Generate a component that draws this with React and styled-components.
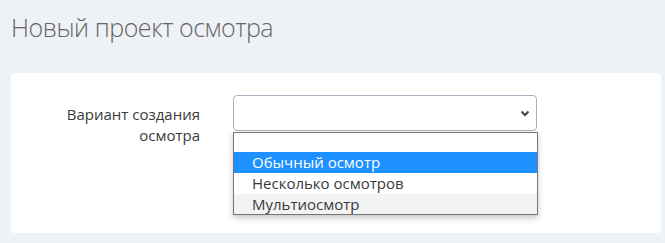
import React from "react";
import styled, { createGlobalStyle } from "styled-components";

const GlobalStyle = createGlobalStyle`
    body {
        margin: 0;
        background-color: #eef1f5;
        font-family: "Open Sans", "Liberation Sans", sans-serif;
    }
`

const Page = styled.div`
    padding: 10px 4px 10px 11px;
`

const Title = styled.h1`
    margin: 0 0 29px 0;
    font-size: 25px;
    letter-spacing: -0.45px;
    font-weight: 300;
    color: #666666;
    line-height: 34px;
`

const Card = styled.div`
    background-color: #ffffff;
    border-radius: 4px;
    padding: 22px 0 18px 0;
    height: 160px;
    box-sizing: border-box;
`

const FormRow = styled.div`
    display: grid;
    grid-template-columns: 189px 304px;
    column-gap: 33px;
    align-items: start;
`

const Label = styled.label`
    padding-top: 9px;
    text-align: right;
    font-size: 15px;
    line-height: 21.4px;
    color: #3a3a3a;
`

const SelectWrap = styled.div`
    position: relative;
`

const SelectBox = styled.div`
    height: 36px;
    box-sizing: border-box;
    border: 1px solid #a9b1c2;
    border-radius: 4px;
    background-color: #ffffff;
    display: flex;
    align-items: center;
    justify-content: flex-end;
    padding-right: 6px;
`

const Dropdown = styled.ul`
    position: absolute;
    top: 37px;
    left: 0;
    width: 305px;
    box-sizing: border-box;
    margin: 0;
    padding: 0;
    list-style: none;
    background-color: #ffffff;
    border: 1px solid #767676;
    box-shadow: 0 3px 6px rgba(0, 0, 0, 0.22);
`

const Option = styled.li`
    height: ${(p) => p.$h || 21}px;
    line-height: ${(p) => p.$h || 21}px;
    padding-left: 18px;
    font-size: 15px;
    color: ${(p) => (p.$active ? "#ffffff" : "#3a3a3a")};
    background-color: ${(p) => (p.$active ? "#1e90ff" : p.$hover ? "#f3f3f3" : "#ffffff")};
`

const Chevron = () => (
    <svg width="10" height="7" viewBox="0 0 10 7">
        <path d="M1.5 1.5 L5 5 L8.5 1.5" fill="none" stroke="#444" strokeWidth="2" />
    </svg>
)

const App = () => {
    return (
        <>
            <GlobalStyle />
            <Page>
                <Title>Новый проект осмотра</Title>
                <Card>
                    <FormRow>
                        <Label>Вариант создания осмотра</Label>
                        <SelectWrap>
                            <SelectBox>
                                <Chevron />
                            </SelectBox>
                            <Dropdown>
                                <Option $h={19}></Option>
                                <Option $active>Обычный осмотр</Option>
                                <Option>Несколько осмотров</Option>
                                <Option $hover $h={20}>Мультиосмотр</Option>
                            </Dropdown>
                        </SelectWrap>
                    </FormRow>
                </Card>
            </Page>
        </>
    )
}

export default App;
